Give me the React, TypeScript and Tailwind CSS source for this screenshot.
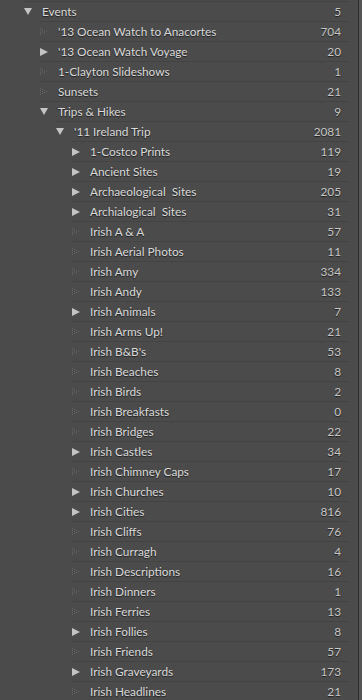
import React from 'react';

type Kind = 'open' | 'closed' | 'leaf';

const rows: { name: string; count: number; level: number; kind: Kind }[] = [
  { name: 'Events', count: 5, level: 0, kind: 'open' },
  { name: "'13 Ocean Watch to Anacortes", count: 704, level: 1, kind: 'leaf' },
  { name: "'13 Ocean Watch Voyage", count: 20, level: 1, kind: 'closed' },
  { name: '1-Clayton Slideshows', count: 1, level: 1, kind: 'leaf' },
  { name: 'Sunsets', count: 21, level: 1, kind: 'leaf' },
  { name: 'Trips & Hikes', count: 9, level: 1, kind: 'open' },
  { name: "'11 Ireland Trip", count: 2081, level: 2, kind: 'open' },
  { name: '1-Costco Prints', count: 119, level: 3, kind: 'closed' },
  { name: 'Ancient Sites', count: 19, level: 3, kind: 'closed' },
  { name: 'Archaeological\u00a0 Sites', count: 205, level: 3, kind: 'closed' },
  { name: 'Archialogical\u00a0 Sites', count: 31, level: 3, kind: 'closed' },
  { name: 'Irish A & A', count: 57, level: 3, kind: 'leaf' },
  { name: 'Irish Aerial Photos', count: 11, level: 3, kind: 'leaf' },
  { name: 'Irish Amy', count: 334, level: 3, kind: 'leaf' },
  { name: 'Irish Andy', count: 133, level: 3, kind: 'leaf' },
  { name: 'Irish Animals', count: 7, level: 3, kind: 'closed' },
  { name: 'Irish Arms Up!', count: 21, level: 3, kind: 'leaf' },
  { name: "Irish B&B's", count: 53, level: 3, kind: 'leaf' },
  { name: 'Irish Beaches', count: 8, level: 3, kind: 'leaf' },
  { name: 'Irish Birds', count: 2, level: 3, kind: 'leaf' },
  { name: 'Irish Breakfasts', count: 0, level: 3, kind: 'leaf' },
  { name: 'Irish Bridges', count: 22, level: 3, kind: 'leaf' },
  { name: 'Irish Castles', count: 34, level: 3, kind: 'closed' },
  { name: 'Irish Chimney Caps', count: 17, level: 3, kind: 'leaf' },
  { name: 'Irish Churches', count: 10, level: 3, kind: 'closed' },
  { name: 'Irish Cities', count: 816, level: 3, kind: 'closed' },
  { name: 'Irish Cliffs', count: 76, level: 3, kind: 'leaf' },
  { name: 'Irish Curragh', count: 4, level: 3, kind: 'leaf' },
  { name: 'Irish Descriptions', count: 16, level: 3, kind: 'leaf' },
  { name: 'Irish Dinners', count: 1, level: 3, kind: 'leaf' },
  { name: 'Irish Ferries', count: 13, level: 3, kind: 'leaf' },
  { name: 'Irish Follies', count: 8, level: 3, kind: 'closed' },
  { name: 'Irish Friends', count: 57, level: 3, kind: 'leaf' },
  { name: 'Irish Graveyards', count: 173, level: 3, kind: 'closed' },
  { name: 'Irish Headlines', count: 21, level: 3, kind: 'leaf' },
];

const indent = ['pl-[24px]', 'pl-[40px]', 'pl-[56px]', 'pl-[72px]'];

const Toggle = ({ kind }: { kind: Kind }) => {
  if (kind === 'open')
    return (
      <svg width="8" height="7" viewBox="0 0 8 7">
        <path d="M0 0H8L4 7Z" fill="#c4c4c4" />
      </svg>
    );
  if (kind === 'closed')
    return (
      <svg width="8" height="8" viewBox="0 0 8 8">
        <path d="M0 0L8 4L0 8Z" fill="#c4c4c4" />
      </svg>
    );
  // dotted placeholder for folders with no children
  const dots = [
    [0, 0], [0, 2], [0, 4], [0, 6],
    [2, 1], [2, 3], [2, 5],
    [4, 2], [4, 4],
    [6, 3],
  ];
  return (
    <svg width="8" height="7" viewBox="0 0 8 7">
      {dots.map(([x, y], i) => (
        <rect key={i} x={x} y={y} width="1" height="1" fill="#666666" />
      ))}
    </svg>
  );
};

export default function App() {
  return (
    <div className="w-[362px] h-[700px] overflow-hidden bg-[#4b4b4b] flex font-['Lato',sans-serif] text-[11.8px]">
      <div className="w-[348px] pt-px">
        {rows.map((r, i) => (
          <div key={i} className={`${indent[r.level]}`}>
            <div className="h-[20px] border-t border-[#434343] flex items-center pr-[7px] [text-shadow:0_1px_1px_rgba(0,0,0,0.6)]">
              <div className="w-[18px] flex items-center">
                <Toggle kind={r.kind} />
              </div>
              <span className="flex-1 text-[#dadada] whitespace-nowrap">{r.name}</span>
              <span className="text-[#c6c6c6]">{r.count}</span>
            </div>
          </div>
        ))}
      </div>
      <div className="w-[10px]" />
      <div className="w-px bg-[#2e2e2e]" />
      <div className="flex-1 bg-[#555555]" />
    </div>
  );
}
